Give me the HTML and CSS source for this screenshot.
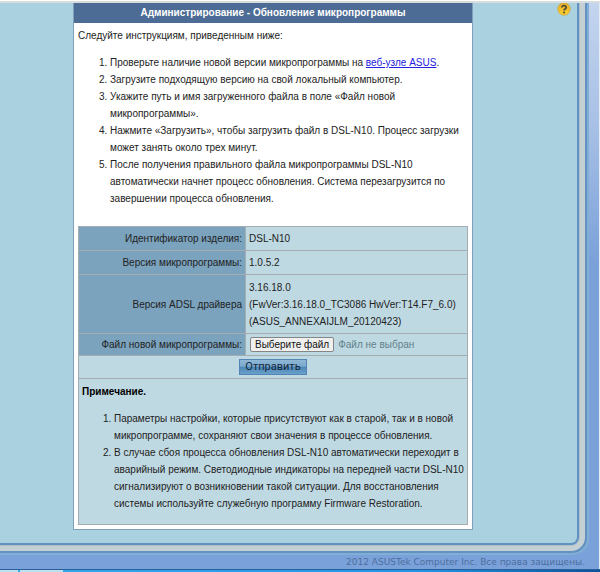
FILE: index.html
```html
<!DOCTYPE html>
<html lang="ru">
<head>
  <meta charset="UTF-8">
  <meta name="viewport" content="width=device-width, initial-scale=1.0">
  <title>Обновление микропрограммы</title>
  <link rel="stylesheet" href="styles.css">
</head>
<body>
  <div class="topline"></div>
  <div class="desk">
    <div class="screen">
      <main class="panel">
        <h1>Администрирование - Обновление микропрограммы</h1>
        <div class="instructions">
          <p>Следуйте инструкциям, приведенным ниже:</p>
          <ol>
            <li>Проверьте наличие новой версии микропрограммы на <a href="#">веб-узле ASUS</a>.</li>
            <li>Загрузите подходящую версию на свой локальный компьютер.</li>
            <li>Укажите путь и имя загруженного файла в поле «Файл новой микропрограммы».</li>
            <li>Нажмите «Загрузить», чтобы загрузить файл в DSL-N10. Процесс загрузки может занять около трех минут.</li>
            <li>После получения правильного файла микропрограммы DSL-N10 автоматически начнет процесс обновления. Система перезагрузится по завершении процесса обновления.</li>
          </ol>
        </div>
        <form>
          <table>
            <tr>
              <th scope="row">Идентификатор изделия:</th>
              <td>DSL-N10</td>
            </tr>
            <tr>
              <th scope="row">Версия микропрограммы:</th>
              <td>1.0.5.2</td>
            </tr>
            <tr>
              <th scope="row">Версия ADSL драйвера</th>
              <td class="driver">3.16.18.0<br>(FwVer:3.16.18.0_TC3086 HwVer:T14.F7_6.0)<br>(ASUS_ANNEXAIJLM_20120423)</td>
            </tr>
            <tr class="upload">
              <th scope="row"><label for="firmware">Файл новой микропрограммы:</label></th>
              <td>
                <div class="picker">
                  <input type="file" id="firmware">
                  <label class="choose" for="firmware">Выберите файл</label>
                  <span class="filename" id="filename">Файл не выбран</span>
                </div>
              </td>
            </tr>
            <tr class="submit">
              <td colspan="2"><button type="submit">Отправить</button></td>
            </tr>
            <tr>
              <td class="note" colspan="2">
                <h2>Примечание.</h2>
                <ol>
                  <li>Параметры настройки, которые присутствуют как в старой, так и в новой микропрограмме, сохраняют свои значения в процессе обновления.</li>
                  <li>В случае сбоя процесса обновления DSL-N10 автоматически переходит в аварийный режим. Светодиодные индикаторы на передней части DSL-N10 сигнализируют о возникновении такой ситуации. Для восстановления системы используйте служебную программу Firmware Restoration.</li>
                </ol>
              </td>
            </tr>
          </table>
        </form>
      </main>
      <a class="help" href="#" aria-label="Справка">
        <svg width="14" height="14" viewBox="0 0 14 14">
          <defs>
            <linearGradient id="gold" x1="0" y1="0" x2="0" y2="1">
              <stop offset="0" stop-color="#e0ae28"/>
              <stop offset="1" stop-color="#fbd02c"/>
            </linearGradient>
          </defs>
          <circle cx="7" cy="6" r="6.2" fill="url(#gold)" stroke="#d3a73a" stroke-width=".8"/>
          <path d="M4.8 4.6C4.8 2 9.3 2.1 9.2 4.6C9.1 6 7 6 7 7.6" fill="none" stroke="#4f4a38" stroke-width="1.7"/>
          <circle cx="7" cy="9.6" r="1" fill="#4f4a38"/>
        </svg>
      </a>
    </div>
    <footer>2012 ASUSTek Computer Inc. Все права защищены.</footer>
  </div>
  <div class="taskbar"><span class="task"></span><span class="task wide"></span></div>

  <script>
    document.getElementById('firmware').onchange = function () {
      document.getElementById('filename').innerText = this.files.length ? this.files[0].name : 'Файл не выбран';
    };
  </script>
</body>
</html>
```
FILE: styles.css
```css
* {
  box-sizing: border-box;
}

body {
  margin: 0;
  min-height: 100vh;
  display: flex;
  flex-direction: column;
  font-family: "Liberation Sans", Arial, sans-serif;
  font-size: 10px;
  line-height: 17px;
  color: #222;
}

.topline {
  height: 3px;
  background: #fff;
  border-bottom: 2px solid #d8dcdd;
}

.desk {
  flex: 1;
  display: flex;
  flex-direction: column;
  overflow: hidden;
  border-right: 1px solid #e4ecf6;
  background: linear-gradient(#c3d4ee, #a9c1e6 120px, #7aa1d9 260px, #7ba1da);
}

/* nested rings of the router frame */
.screen {
  flex: 1;
  display: grid;
  grid-template-columns: 73px 1fr 104px;
  align-items: start;
  margin: 0 22px 12px 0;
  padding-bottom: 13px;
  background: #a9d1e0;
  border-radius: 0 0 6px 0;
  box-shadow: 0 0 0 2px #6292c2, 0 0 0 3px #aebfc8, 0 0 0 8px #c4d0d4, 0 0 0 10px #6292c2, 0 0 0 12px #80aed4;
}

.panel {
  grid-column: 2;
  background: #fff;
  border: 1px solid #7f9fbd;
  border-top: none;
}

h1 {
  margin: 0;
  padding-bottom: 1px;
  background: #4c6c95;
  color: #fff;
  font-size: 10px;
  line-height: 19px;
  text-align: center;
}

.instructions {
  padding: 4px 4px 19px;
}

p {
  margin: 0 0 10px;
}

ol {
  margin: 0;
  padding-left: 32px;
}

a {
  color: #2222e0;
}

form {
  padding: 0 4px 4px;
}

table {
  width: 100%;
  border-collapse: collapse;
  background: #bfd9e2;
}

th,
td {
  border: 1px solid #a3adb2;
  padding: 3px;
  height: 24px;
}

th {
  width: 167px;
  background: #7ba3be;
  font-weight: normal;
  text-align: right;
}

.driver {
  padding-top: 4px;
}

.upload th,
.upload td {
  height: 22px;
  padding: 1px 3px;
}

.picker {
  display: flex;
  align-items: center;
  gap: 4px;
  padding-left: 1px;
}

.picker input {
  position: absolute;
  width: 1px;
  height: 1px;
  opacity: 0;
}

.choose {
  padding: 0 4px;
  background: #efefef;
  border: 1px solid #858585;
  border-radius: 2px;
  line-height: 13px;
  color: #111;
}

.filename {
  color: #60828a;
}

.submit td {
  height: 23px;
  text-align: center;
}

button {
  display: block;
  margin: 0 auto;
  height: 16px;
  padding: 0 5px;
  border: 1px solid #5384b6;
  background: linear-gradient(#8fb8d6, #79a9cd 45%, #4a87b6 50%, #6ba0c9);
  font-family: Roboto, sans-serif;
  font-size: 11px;
  line-height: 14px;
  color: #16283b;
}

.note {
  padding: 4px 3px 12px;
}

h2 {
  margin: 0 0 10px;
  font-size: 10px;
  color: #000;
}

.help {
  grid-column: 3;
  justify-self: end;
  margin-right: 6px;
  line-height: 0;
}

footer {
  padding-right: 14px;
  text-align: right;
  font-family: "DejaVu Sans", Verdana, sans-serif;
  font-size: 9px;
  line-height: 14px;
  color: #4c6f9f;
}

.taskbar {
  display: flex;
  gap: 2px;
  height: 3px;
  border-top: 1px solid #28619a;
  background: linear-gradient(90deg, #35a9ee, #2196e8 70%, #0b5398);
}

.task {
  width: 18px;
  background: #bfe0ee;
}

.wide {
  width: 43px;
}
```
